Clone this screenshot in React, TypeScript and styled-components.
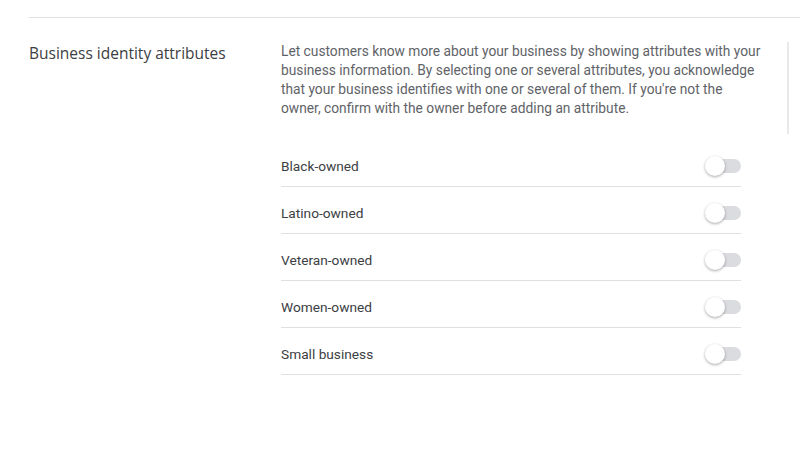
import styled, { createGlobalStyle } from "styled-components";

const GlobalStyle = createGlobalStyle`
  html, body {
    margin: 0;
    padding: 0;
    background: #fff;
  }
  body {
    font-family: Roboto, "Liberation Sans", Arial, sans-serif;
    -webkit-font-smoothing: antialiased;
  }
`;

const ATTRIBUTES = [
  "Black-owned",
  "Latino-owned",
  "Veteran-owned",
  "Women-owned",
  "Small business",
];

const Toggle: React.FC<{ on?: boolean }> = ({ on = false }) => (
  <Switch role="switch" aria-checked={on}>
    <Track />
    <Thumb />
  </Switch>
);

const App: React.FC = () => {
  return (
    <>
      <GlobalStyle />
      <Page>
        <Section>
          <Heading>Business identity attributes</Heading>
          <Content>
            <Description>
              Let customers know more about your business by showing attributes
              with your business information. By selecting one or several
              attributes, you acknowledge that your business identifies with
              one or several of them. If you're not the owner, confirm with the
              owner before adding an attribute.
            </Description>
            <List>
              {ATTRIBUTES.map((label) => (
                <Row key={label}>
                  <Label>{label}</Label>
                  <Toggle />
                </Row>
              ))}
            </List>
          </Content>
          <SideRule />
        </Section>
      </Page>
    </>
  );
};

export default App;

const Page = styled.div`
  width: 800px;
  height: 450px;
  padding-top: 17px;
  padding-left: 29px;
  box-sizing: border-box;
  overflow: hidden;
`;

const Section = styled.section`
  display: flex;
  align-items: flex-start;
  border-top: 1px solid #e0e0e0;
  padding-top: 24px;
`;

const Heading = styled.h2`
  width: 252px;
  flex-shrink: 0;
  margin: 0;
  padding-top: 1px;
  font-family: "Open Sans", Roboto, sans-serif;
  font-size: 15.5px;
  font-weight: 400;
  line-height: 20px;
  color: #3c4043;
`;

const Content = styled.div`
  width: 483px;
  flex-shrink: 0;
`;

const Description = styled.p`
  margin: 0;
  font-size: 13.75px;
  line-height: 19px;
  color: #5f6368;
`;

const List = styled.div`
  width: 460px;
  margin-top: 22px;
`;

const Row = styled.div`
  height: 47px;
  display: flex;
  align-items: center;
  justify-content: space-between;
  padding-top: 5px;
  box-sizing: border-box;
  border-bottom: 1px solid #e0e0e0;
`;

const Label = styled.span`
  font-size: 13.7px;
  color: #3c4043;
`;

const Switch = styled.div`
  position: relative;
  width: 36px;
  height: 20px;
  flex-shrink: 0;
`;

const Track = styled.div`
  position: absolute;
  left: 2px;
  right: 0;
  top: 3px;
  height: 14px;
  border-radius: 7px;
  background: #dadce0;
`;

const Thumb = styled.div`
  position: absolute;
  left: 0;
  top: 0;
  width: 20px;
  height: 20px;
  border-radius: 50%;
  background: #fff;
  box-shadow: 0 1px 3px rgba(0, 0, 0, 0.35);
`;

const SideRule = styled.div`
  width: 2px;
  height: 92px;
  margin-left: 23px;
  background: #e8e8e8;
`;
